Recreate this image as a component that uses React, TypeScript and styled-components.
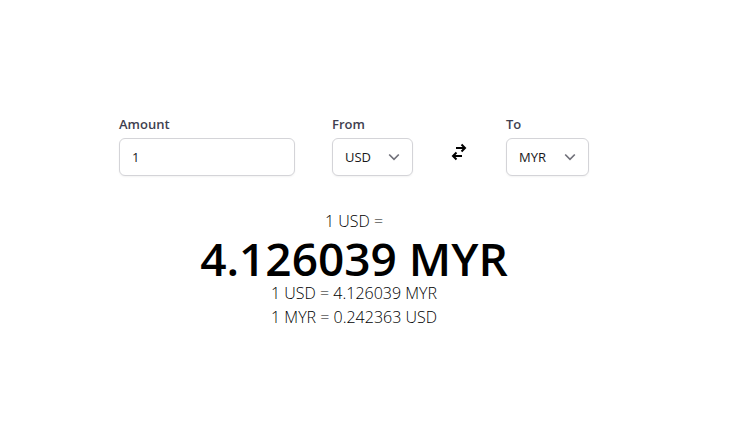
import { useState } from "react";
import styled, { createGlobalStyle } from "styled-components";

const GlobalStyle = createGlobalStyle`
  *, *::before, *::after { box-sizing: border-box; }
  body {
    margin: 0;
    background: #fff;
    color: #000;
    font-family: "Segoe UI", "Open Sans", "Noto Sans", sans-serif;
  }
`;

const Page = styled.main`
  min-height: 100vh;
  padding: 116px 36px 108px 0;
  display: flex;
  flex-direction: column;
  align-items: center;
  gap: 33px;
`;

const Form = styled.form`
  display: flex;
  align-items: flex-start;
  gap: 37px;
`;

const Field = styled.div`
  display: flex;
  flex-direction: column;
  gap: 6px;
`;

const Label = styled.label`
  font-size: 13px;
  font-weight: 600;
  line-height: 16px;
  color: #3f3f50;
`;

const AmountInput = styled.input`
  width: 176px;
  height: 38px;
  padding: 0 12px;
  border: 1px solid #d4d4d8;
  border-radius: 6px;
  background: #fff;
  box-shadow: 0 1px 2px rgba(0, 0, 0, 0.05);
  color: #18181b;
  font: 400 13px/20px "Segoe UI", "Open Sans", "Noto Sans", sans-serif;
`;

const SelectBox = styled.div`
  display: grid;
  align-items: center;

  > * { grid-area: 1 / 1; }

  svg {
    justify-self: end;
    margin-right: 13px;
    pointer-events: none;
  }
`;

const Select = styled.select<{ $width: number }>`
  appearance: none;
  width: ${({ $width }) => $width}px;
  height: 38px;
  padding: 0 32px 0 12px;
  border: 1px solid #d4d4d8;
  border-radius: 6px;
  background: #fff;
  box-shadow: 0 1px 2px rgba(0, 0, 0, 0.05);
  color: #18181b;
  font: 400 13px/20px "Segoe UI", "Open Sans", "Noto Sans", sans-serif;
`;

const SwapButton = styled.button`
  align-self: center;
  display: flex;
  margin: 12px 0 0;
  padding: 0;
  border: 0;
  background: none;
  color: #000;
  cursor: pointer;
`;

const Result = styled.section`
  text-align: center;
`;

const Line = styled.p`
  margin: 0;
  font-size: 16px;
  font-weight: 300;
  line-height: 24px;
`;

const Total = styled.h1`
  margin: 0 0 -2px;
  font-size: 46px;
  font-weight: 600;
  line-height: 50px;
`;

const rates: Record<string, number> = { USD: 4.126039, MYR: 0.242363 };

interface CurrencyProps {
  id: string;
  label: string;
  value: string;
  width: number;
  onChange: () => void;
}

function CurrencyField({ id, label, value, width, onChange }: CurrencyProps) {
  return (
    <Field>
      <Label htmlFor={id}>{label}</Label>
      <SelectBox>
        <Select id={id} $width={width} value={value} onChange={onChange}>
          <option>USD</option>
          <option>MYR</option>
        </Select>
        <svg width="12" height="12" viewBox="0 0 12 12" fill="none" stroke="#71717a" strokeWidth="1.7" aria-hidden="true">
          <path d="M1.2 3.5 6 8.3l4.8-4.8" />
        </svg>
      </SelectBox>
    </Field>
  );
}

export default function App() {
  const [amount, setAmount] = useState("1");
  const [from, setFrom] = useState("USD");
  const to = from === "USD" ? "MYR" : "USD";
  const swap = () => setFrom(to);
  const total = ((Number(amount) || 0) * rates[from]).toFixed(6);

  return (
    <>
      <GlobalStyle />
      <Page>
        <Form onSubmit={(event) => event.preventDefault()}>
          <Field>
            <Label htmlFor="amount">Amount</Label>
            <AmountInput id="amount" value={amount} onChange={(event) => setAmount(event.target.value)} />
          </Field>
          <CurrencyField id="from" label="From" value={from} width={81} onChange={swap} />
          <SwapButton type="button" aria-label="Swap currencies" onClick={swap}>
            <svg width="19" height="18" viewBox="0 0 19 18" fill="none" stroke="currentColor" strokeWidth="2" aria-hidden="true">
              <path d="M6 5h9M11.5 1.5 15 5l-3.500 3.500M12 13H3M6.500 9.500 3 13l3.500 3.500" />
            </svg>
          </SwapButton>
          <CurrencyField id="to" label="To" value={to} width={83} onChange={swap} />
        </Form>
        <Result>
          <Line>{amount} {from} =</Line>
          <Total>{total} {to}</Total>
          <Line>1 {from} = {rates[from]} {to}</Line>
          <Line>1 {to} = {rates[to]} {from}</Line>
        </Result>
      </Page>
    </>
  );
}
